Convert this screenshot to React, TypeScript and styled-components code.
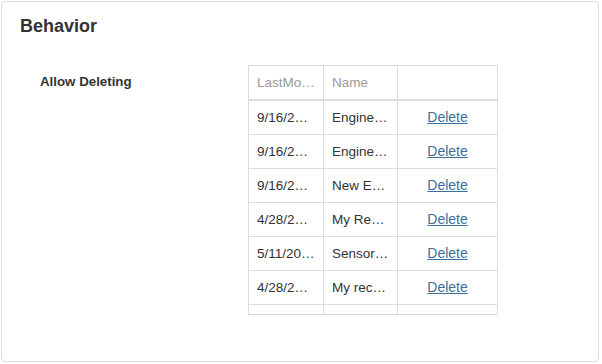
import styled, { createGlobalStyle } from "styled-components";

const GlobalStyle = createGlobalStyle`
  body {
    margin: 0;
    background: #ffffff;
    font-family: "Liberation Sans", Arial, sans-serif;
    color: #333333;
  }
`;

const Panel = styled.section`
  box-sizing: border-box;
  width: 598px;
  height: 361px;
  margin: 1px;
  padding: 14px 18px 0 18px;
  border: 1px solid #dddddd;
  border-radius: 4px;
  background: #ffffff;
`;

const Title = styled.h3`
  margin: 0;
  font-size: 18px;
  line-height: 20px;
  font-weight: 700;
  color: #333333;
`;

const Section = styled.div`
  display: grid;
  grid-template-columns: 228px 250px;
  margin-top: 29px;
`;

const Label = styled.div`
  padding-left: 20px;
  font-size: 13.3px;
  font-weight: 700;
  line-height: 34px;
  color: #333333;
`;

const GridBox = styled.div`
  box-sizing: border-box;
  width: 250px;
  height: 250px;
  border: 1px solid #dddddd;
  overflow: hidden;
`;

const Row = styled.div<{ $head?: boolean }>`
  display: grid;
  grid-template-columns: 75px 74px 99px;
  height: ${(p) => (p.$head ? 35 : 34)}px;
  box-sizing: border-box;
  border-bottom: ${(p) => (p.$head ? 2 : 1)}px solid #dddddd;
`;

const Cell = styled.div<{ $last?: boolean; $head?: boolean; $center?: boolean }>`
  box-sizing: border-box;
  padding: 0 8px;
  border-right: ${(p) => (p.$last ? "none" : "1px solid #dddddd")};
  font-size: 13.5px;
  line-height: 33px;
  color: ${(p) => (p.$head ? "#9a9a9a" : "#333333")};
  text-align: ${(p) => (p.$center ? "center" : "left")};
  white-space: nowrap;
  overflow: hidden;
  text-overflow: ellipsis;
`;

const DeleteLink = styled.a`
  color: #3b6f9f;
  text-decoration: underline;
  font-size: 14px;
`;

const rows = [
  { date: "9/16/2015 10:21 AM", name: "Engineering Report" },
  { date: "9/16/2015 10:24 AM", name: "Engineering Summary" },
  { date: "9/16/2015 11:02 AM", name: "New Employee" },
  { date: "4/28/2015 3:15 PM", name: "My Report" },
  { date: "5/11/2015 9:40 AM", name: "Sensor Data" },
  { date: "4/28/2015 3:17 PM", name: "My recent items" },
  { date: "4/28/2015 3:20 PM", name: "Another" },
];

export default function App() {
  return (
    <>
      <GlobalStyle />
      <Panel>
        <Title>Behavior</Title>
        <Section>
          <Label>Allow Deleting</Label>
          <GridBox>
            <Row $head>
              <Cell $head>LastModified</Cell>
              <Cell $head>Name</Cell>
              <Cell $head $last />
            </Row>
            {rows.map((r, i) => (
              <Row key={i}>
                <Cell>{r.date}</Cell>
                <Cell>{r.name}</Cell>
                <Cell $last $center>
                  <DeleteLink href="#">Delete</DeleteLink>
                </Cell>
              </Row>
            ))}
          </GridBox>
        </Section>
      </Panel>
    </>
  );
}
